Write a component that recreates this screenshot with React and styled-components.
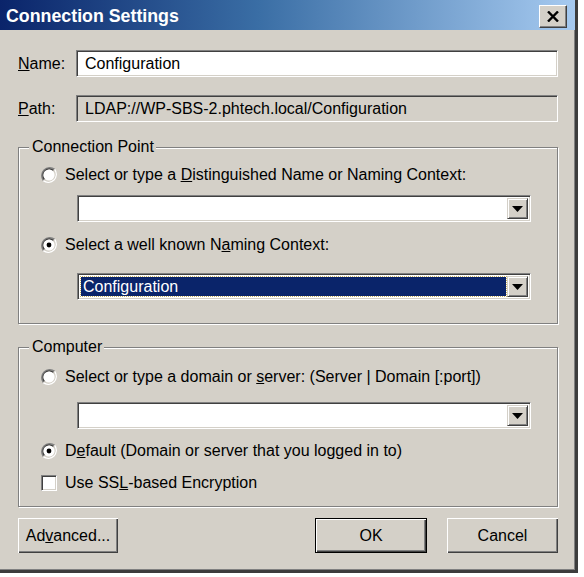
import React from 'react';
import styled, { createGlobalStyle } from 'styled-components';

const GlobalStyle = createGlobalStyle`
  html, body {
    margin: 0;
    padding: 0;
    background: #ffffff;
  }
  body {
    font-family: 'Liberation Sans', Arial, sans-serif;
    font-size: 16px;
    color: #000;
  }
`;

const RadioIcon = ({ checked }) => (
  <svg width="16" height="16" viewBox="0 0 16 16">
    <path d="M13.6 2.4 A8 8 0 0 0 2.4 13.6" fill="none" stroke="#808080" strokeWidth="1.5" />
    <path d="M2.4 13.6 A8 8 0 0 0 13.6 2.4" fill="none" stroke="#ffffff" strokeWidth="1.5" />
    <path d="M12.5 3.5 A6.4 6.4 0 0 0 3.5 12.5" fill="none" stroke="#404040" strokeWidth="1.5" />
    <path d="M3.5 12.5 A6.4 6.4 0 0 0 12.5 3.5" fill="none" stroke="#d4d0c8" strokeWidth="1.5" />
    <circle cx="8" cy="8" r="5.6" fill="#ffffff" />
    {checked && <circle cx="8" cy="8" r="2.4" fill="#000" />}
  </svg>
);

const ArrowIcon = () => (
  <svg width="11" height="6" viewBox="0 0 11 6">
    <path d="M0 0 H11 L5.5 6 Z" fill="#000" />
  </svg>
);

const Accel = ({ children }) => <u>{children}</u>;

const App = () => {
  return (
    <>
      <GlobalStyle />
      <Window>
        <TitleBar>
          <Title>Connection Settings</Title>
          <CloseButton>
            <svg width="12" height="11" viewBox="0 0 12 11">
              <path d="M1 0.5 L11 10.5 M11 0.5 L1 10.5" stroke="#000" strokeWidth="2.4" />
            </svg>
          </CloseButton>
        </TitleBar>
        <Body>
          <FieldRow>
            <Label><Accel>N</Accel>ame:</Label>
            <TextBox>Configuration</TextBox>
          </FieldRow>
          <FieldRow $gap={18}>
            <Label><Accel>P</Accel>ath:</Label>
            <TextBox $readOnly>LDAP://WP-SBS-2.phtech.local/Configuration</TextBox>
          </FieldRow>

          <Group $top={25} $padTop={17} $padBottom={23}>
            <Legend>Connection Point</Legend>
            <Option>
              <RadioIcon />
              <span>Select or type a <Accel>D</Accel>istinguished Name or Naming Context:</span>
            </Option>
            <Combo $gap={10}>
              <ComboField />
              <ComboButton><ArrowIcon /></ComboButton>
            </Combo>
            <Option $gap={13}>
              <RadioIcon checked />
              <span>Select a well known N<Accel>a</Accel>ming Context:</span>
            </Option>
            <Combo $gap={18}>
              <ComboField>
                <Selection>Configuration</Selection>
              </ComboField>
              <ComboButton><ArrowIcon /></ComboButton>
            </Combo>
          </Group>

          <Group $top={23} $padTop={19} $padBottom={13}>
            <Legend>Computer</Legend>
            <Option>
              <RadioIcon />
              <span>Select or type a domain or <Accel>s</Accel>erver: (Server | Domain [:port])</span>
            </Option>
            <Combo $gap={15}>
              <ComboField />
              <ComboButton><ArrowIcon /></ComboButton>
            </Combo>
            <Option $gap={12}>
              <RadioIcon checked />
              <span>D<Accel>e</Accel>fault (Domain or server that you logged in to)</span>
            </Option>
            <Option $gap={12}>
              <CheckBox />
              <span>Use SS<Accel>L</Accel>-based Encryption</span>
            </Option>
          </Group>

          <ButtonRow>
            <Button $width={100}>Ad<Accel>v</Accel>anced...</Button>
            <Spacer />
            <Button $width={112} $default>OK</Button>
            <Button $width={111}>Cancel</Button>
          </ButtonRow>
        </Body>
      </Window>
    </>
  );
};

export default App;

const Window = styled.div`
  width: 575px;
  height: 570px;
  box-sizing: content-box;
  background: #d4d0c8;
  border-right: 3px solid #3c3c3c;
  border-bottom: 3px solid #3c3c3c;
  box-shadow: inset -1px -1px 0 #808080;
  display: flex;
  flex-direction: column;
`;

const TitleBar = styled.div`
  height: 30px;
  display: flex;
  align-items: center;
  justify-content: space-between;
  padding: 2px 8px 0 6px;
  box-sizing: border-box;
  background: linear-gradient(to right, #0a246a 0%, #3a6ea5 45%, #a6caf0 100%);
`;

const Title = styled.div`
  color: #fff;
  font-weight: bold;
  font-size: 17.8px;
`;

const CloseButton = styled.div`
  width: 28px;
  height: 23px;
  box-sizing: border-box;
  display: flex;
  align-items: center;
  justify-content: center;
  background: #d4d0c8;
  border-top: 1px solid #fff;
  border-left: 1px solid #fff;
  border-right: 1px solid #404040;
  border-bottom: 1px solid #404040;
  box-shadow: inset -1px -1px 0 #808080;
`;

const Body = styled.div`
  padding: 20px 17px 0 18px;
  display: flex;
  flex-direction: column;
`;

const FieldRow = styled.div`
  display: flex;
  align-items: center;
  margin-top: ${p => p.$gap || 0}px;
`;

const Label = styled.div`
  width: 58px;
`;

const sunken = `
  box-sizing: border-box;
  border-top: 1px solid #808080;
  border-left: 1px solid #808080;
  border-right: 1px solid #fff;
  border-bottom: 1px solid #fff;
  box-shadow: inset 1px 1px 0 #404040, inset -1px -1px 0 #d4d0c8;
`;

const TextBox = styled.div`
  ${sunken}
  flex: 1;
  height: 27px;
  display: flex;
  align-items: center;
  padding: 0 8px;
  background: ${p => (p.$readOnly ? '#d4d0c8' : '#fff')};
`;

const Group = styled.div`
  position: relative;
  margin-top: ${p => p.$top}px;
  padding: ${p => p.$padTop}px 26px ${p => p.$padBottom}px 22px;
  border: 1px solid #808080;
  box-shadow: inset 1px 1px 0 #fff, 1px 1px 0 #fff;
  display: flex;
  flex-direction: column;
`;

const Legend = styled.div`
  position: absolute;
  top: -11px;
  left: 10px;
  padding: 0 2px 0 3px;
  background: #d4d0c8;
  line-height: 19px;
`;

const Option = styled.div`
  display: flex;
  align-items: center;
  gap: 8px;
  height: 20px;
  margin-top: ${p => p.$gap || 0}px;
`;

const CheckBox = styled.div`
  ${sunken}
  width: 16px;
  height: 16px;
  background: #fff;
`;

const Combo = styled.div`
  ${sunken}
  margin-top: ${p => p.$gap || 0}px;
  margin-left: 36px;
  height: 27px;
  display: flex;
  padding: 2px;
  background: #fff;
`;

const ComboField = styled.div`
  flex: 1;
  display: flex;
  align-items: stretch;
  padding: 1px;
  background: #fff;
`;

const Selection = styled.div`
  flex: 1;
  display: flex;
  align-items: center;
  padding-left: 2px;
  background: #0a246a;
  color: #fff;
  outline: 1px dotted #c8b060;
`;

const ComboButton = styled.div`
  width: 21px;
  box-sizing: border-box;
  display: flex;
  align-items: center;
  justify-content: center;
  background: #d4d0c8;
  border-top: 1px solid #d4d0c8;
  border-left: 1px solid #d4d0c8;
  border-right: 1px solid #404040;
  border-bottom: 1px solid #404040;
  box-shadow: inset 1px 1px 0 #fff, inset -1px -1px 0 #808080;
`;

const ButtonRow = styled.div`
  display: flex;
  gap: 20px;
  margin-top: 11px;
`;

const Spacer = styled.div`
  flex: 1;
`;

const Button = styled.div`
  width: ${p => p.$width}px;
  height: 35px;
  box-sizing: border-box;
  display: flex;
  align-items: center;
  justify-content: center;
  background: #d4d0c8;
  border: ${p => (p.$default ? '1px solid #000' : 'none')};
  box-shadow: inset 1px 1px 0 #fff, inset -1px -1px 0 #404040, inset -2px -2px 0 #808080;
`;
